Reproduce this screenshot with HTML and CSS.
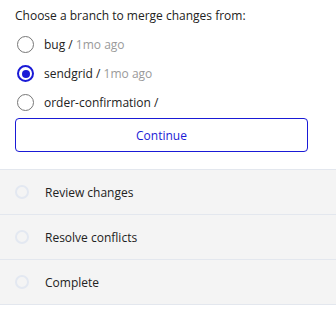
FILE: index.html
```html
<!DOCTYPE html>
<html lang="en">
<head>
  <meta charset="UTF-8">
  <title>Merge</title>
  <link rel="stylesheet" href="styles.css">
</head>
<body>
  <div class="merge-panel">
    <p class="merge-title">Choose a branch to merge changes from:</p>
    <div class="branch-list">
      <label class="branch">
        <span class="radio"></span>
        <span class="branch-name">bug / <span class="branch-time">1mo ago</span></span>
      </label>
      <label class="branch">
        <span class="radio checked"></span>
        <span class="branch-name">sendgrid / <span class="branch-time">1mo ago</span></span>
      </label>
      <label class="branch">
        <span class="radio"></span>
        <span class="branch-name">order-confirmation / </span>
      </label>
    </div>
    <button class="continue-button">Continue</button>
  </div>

  <div class="steps">
    <div class="step"><span class="step-dot"></span>Review changes</div>
    <div class="step"><span class="step-dot"></span>Resolve conflicts</div>
    <div class="step"><span class="step-dot"></span>Complete</div>
  </div>
</body>
</html>
```

FILE: styles.css
```css
body {
    font-family: 'Open Sans', sans-serif;
    font-size: 12px;
    color: #222;
    background-color: white;
    margin: 0;
}

.merge-panel {
    padding: 7px 28px 0 15px;
}

.merge-title {
    margin: 0;
    line-height: 17px;
}

.branch-list {
    margin-top: 6px;
}

.branch {
    display: flex;
    align-items: center;
    height: 29px;
}

.radio {
    width: 17px;
    height: 17px;
    border: 1px solid #777;
    border-radius: 50%;
    margin: 0 10px 0 2px;
    box-sizing: border-box;
}

.radio.checked {
    border: 2px solid #1a1ad6;
    position: relative;
}

.radio.checked::after {
    content: '';
    position: absolute;
    left: 2.5px;
    top: 2.5px;
    width: 8px;
    height: 8px;
    border-radius: 50%;
    background-color: #1a1ad6;
}

.branch-time {
    color: #9a9a9a;
}

.continue-button {
    display: block;
    width: 100%;
    height: 34px;
    margin-top: 1px;
    background-color: white;
    border: 1px solid #1a1ad6;
    border-radius: 4px;
    color: #1a1ad6;
    font-family: 'Open Sans', sans-serif;
    font-size: 12px;
}

.steps {
    margin-top: 17px;
    border-top: 1px solid #e3e7ee;
}

.step {
    display: flex;
    align-items: center;
    height: 44px;
    padding-left: 15px;
    background-color: #f4f4f4;
    border-bottom: 1px solid #e3e7ee;
}

.step-dot {
    width: 14px;
    height: 14px;
    border: 2px solid #e3e8f1;
    border-radius: 50%;
    box-sizing: border-box;
    margin-right: 16px;
}
```
